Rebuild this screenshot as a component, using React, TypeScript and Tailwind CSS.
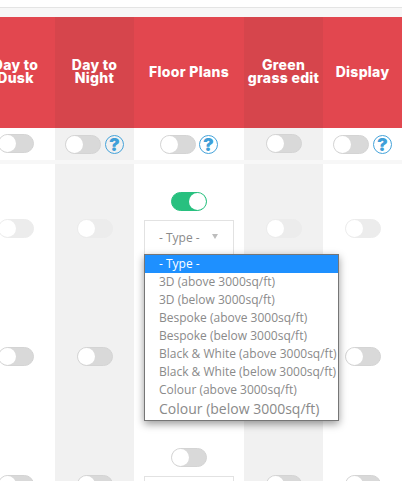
import React from "react";

const font = { head: "font-['Inter','Liberation_Sans',sans-serif]", body: "font-['Open_Sans','Liberation_Sans',sans-serif]" };

function Toggle({ on = false, faded = false }: { on?: boolean; faded?: boolean }) {
  const track = on
    ? "bg-[#28c07f] border-[#28c07f] justify-end"
    : faded
      ? "bg-[#ececec] border-[#ececec] justify-start"
      : "bg-[#d9d9d9] border-[#d4d4d4] justify-start";
  return (
    <span className={`flex h-[19px] w-[36px] shrink-0 items-center rounded-full border ${track}`}>
      <span className="h-[17px] w-[17px] rounded-full bg-white" />
    </span>
  );
}

function Help({ gap }: { gap: string }) {
  return (
    <span className={`${gap} flex h-[19px] w-[19px] shrink-0 items-center justify-center rounded-full border-[1.5px] border-[#45a3da] text-[18px] leading-none font-black text-[#3f9fd8] ${font.head}`}>
      ?
    </span>
  );
}

function TypeBox() {
  return (
    <div className="flex h-[44px] w-[90px] items-start justify-between border border-[#e2e2e2] bg-white pt-[8px] pr-[15px] pl-[14px]">
      <span className={`text-[12px] leading-[18px] text-[#8a8a8a] ${font.body}`}>- Type -</span>
      <span className="mt-[5px] h-0 w-0 border-x-[3px] border-t-[5px] border-x-transparent border-t-[#bdbdbd]" />
    </div>
  );
}

const cols = [
  { title: ["Day to", "Dusk"], dark: false, help: false, gap: "" },
  { title: ["Day to", "Night"], dark: true, help: true, gap: "ml-[4px]" },
  { title: ["Floor Plans"], dark: false, help: true, gap: "ml-[3px]" },
  { title: ["Green", "grass edit"], dark: true, help: false, gap: "" },
  { title: ["Display"], dark: false, help: true, gap: "ml-[4px]" },
];

const options = [
  "3D (above 3000sq/ft)",
  "3D (below 3000sq/ft)",
  "Bespoke (above 3000sq/ft)",
  "Bespoke (below 3000sq/ft)",
  "Black & White (above 3000sq/ft)",
  "Black & White (below 3000sq/ft)",
  "Colour (above 3000sq/ft)",
];

const gridCols = "grid grid-cols-[79px_79px_110px_79px_79px] ml-[-24px] w-[426px]";

export default function App() {
  return (
    <div className="relative h-[481px] w-[402px] overflow-hidden bg-white">
      <div className="h-[7px]" />
      <div className="h-[10px] border-t border-[#e4e4e4] bg-[#f7f7f7]" />
      <div className={`${gridCols} h-[111px]`}>
        {cols.map((c) => (
          <div
            key={c.title.join()}
            className={`flex flex-col items-center justify-center pb-[3px] text-center text-[14px] leading-[13px] font-extrabold tracking-[0.3px] text-white ${font.head} ${c.dark ? "bg-[#d6454c]" : "bg-[#e2474f]"}`}
          >
            {c.title.map((t) => (
              <span key={t} className="whitespace-nowrap">{t}</span>
            ))}
          </div>
        ))}
      </div>
      <div className={`${gridCols} h-[32px]`}>
        {cols.map((c) => (
          <div key={c.title.join()} className={`flex items-center justify-center ${c.help ? "pt-[1px]" : "pb-[1px]"} ${c.dark ? "bg-[#f1f1f1]" : "bg-white"}`}>
            <Toggle />
            {c.help && <Help gap={c.gap} />}
          </div>
        ))}
      </div>
      <div className={`${gridCols} h-[4px]`}>
        {cols.map((c) => (
          <div key={c.title.join()} className="bg-[#f7f7f7]" />
        ))}
      </div>
      {[0, 1, 2].map((row) => (
        <div key={row} className={`${gridCols} h-[128px]`}>
          {cols.map((c, i) => (
            <div key={c.title.join()} className={`flex flex-col items-center justify-center ${c.dark ? "bg-[#f1f1f1]" : "bg-white"}`}>
              {i === 2 ? (
                <div className="flex flex-col items-center gap-[9px]">
                  <Toggle on={row === 0} />
                  <TypeBox />
                </div>
              ) : (
                <Toggle faded={row === 0} />
              )}
            </div>
          ))}
        </div>
      ))}
      <div className={`absolute top-[254px] left-[144px] w-[195px] border border-[#767676] bg-white pb-[1px] shadow-[0_3px_8px_rgba(0,0,0,0.4)] ${font.body}`}>
        <div className="h-[18px] bg-[#1e90ff] pl-[14px] text-[12px] leading-[18px] text-white">- Type -</div>
        {options.map((o) => (
          <div key={o} className="h-[18px] pl-[14px] text-[12px] leading-[18px] whitespace-nowrap text-[#8a8a8a]">{o}</div>
        ))}
        <div className="h-[20px] pl-[14px] text-[14px] leading-[20px] whitespace-nowrap text-[#8a8a8a]">Colour (below 3000sq/ft)</div>
      </div>
    </div>
  );
}
